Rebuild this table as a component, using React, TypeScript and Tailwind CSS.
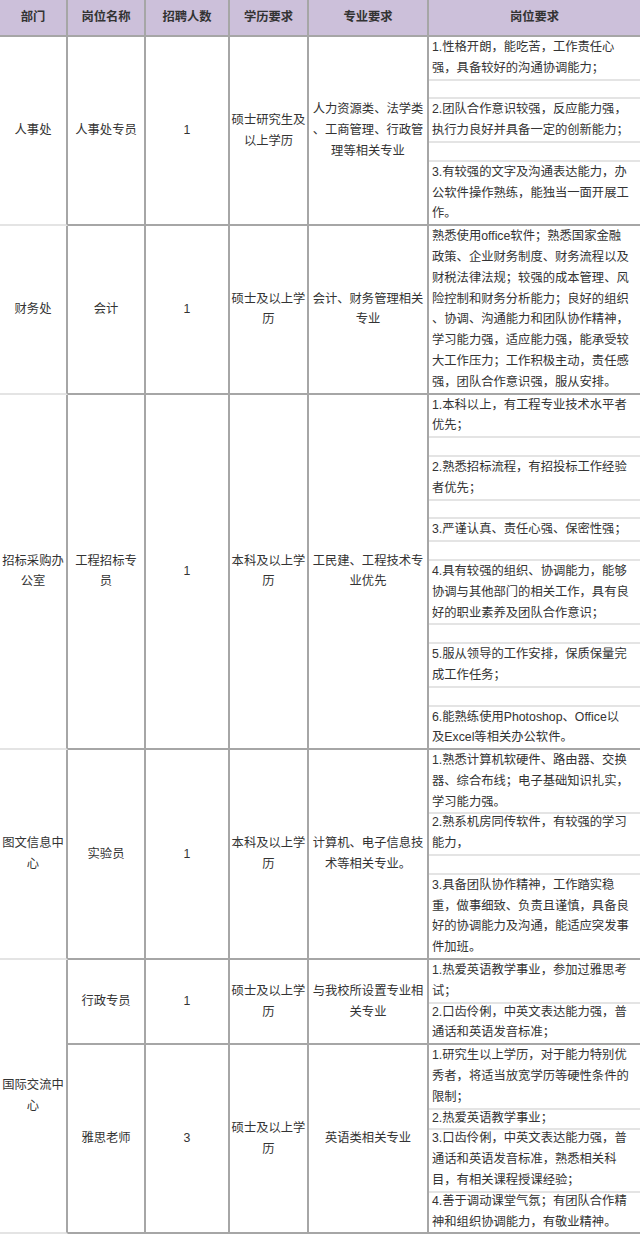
type Item = string[] | null;

type Row = {
  dept?: string[];
  deptSpan?: number;
  post: string[];
  count: string;
  edu: string[];
  major: string[];
  items: Item[];
};

const rows: Row[] = [
  {
    dept: ["人事处"],
    post: ["人事处专员"],
    count: "1",
    edu: ["硕士研究生及", "以上学历"],
    major: ["人力资源类、法学类", "、工商管理、行政管", "理等相关专业"],
    items: [
      ["1.性格开朗，能吃苦，工作责任心", "强，具备较好的沟通协调能力；"],
      null,
      ["2.团队合作意识较强，反应能力强，", "执行力良好并具备一定的创新能力；"],
      null,
      ["3.有较强的文字及沟通表达能力，办", "公软件操作熟练，能独当一面开展工", "作。"],
    ],
  },
  {
    dept: ["财务处"],
    post: ["会计"],
    count: "1",
    edu: ["硕士及以上学", "历"],
    major: ["会计、财务管理相关", "专业"],
    items: [
      [
        "熟悉使用office软件；熟悉国家金融",
        "政策、企业财务制度、财务流程以及",
        "财税法律法规；较强的成本管理、风",
        "险控制和财务分析能力；良好的组织",
        "、协调、沟通能力和团队协作精神，",
        "学习能力强，适应能力强，能承受较",
        "大工作压力；工作积极主动，责任感",
        "强，团队合作意识强，服从安排。",
      ],
    ],
  },
  {
    dept: ["招标采购办", "公室"],
    post: ["工程招标专", "员"],
    count: "1",
    edu: ["本科及以上学", "历"],
    major: ["工民建、工程技术专", "业优先"],
    items: [
      ["1.本科以上，有工程专业技术水平者", "优先；"],
      null,
      ["2.熟悉招标流程，有招投标工作经验", "者优先；"],
      null,
      ["3.严谨认真、责任心强、保密性强；"],
      null,
      ["4.具有较强的组织、协调能力，能够", "协调与其他部门的相关工作，具有良", "好的职业素养及团队合作意识；"],
      null,
      ["5.服从领导的工作安排，保质保量完", "成工作任务；"],
      null,
      ["6.能熟练使用Photoshop、Office以", "及Excel等相关办公软件。"],
    ],
  },
  {
    dept: ["图文信息中", "心"],
    post: ["实验员"],
    count: "1",
    edu: ["本科及以上学", "历"],
    major: ["计算机、电子信息技", "术等相关专业。"],
    items: [
      ["1.熟悉计算机软硬件、路由器、交换", "器、综合布线；电子基础知识扎实，", "学习能力强。"],
      ["2.熟系机房同传软件，有较强的学习", "能力，"],
      null,
      ["3.具备团队协作精神，工作踏实稳", "重，做事细致、负责且谨慎，具备良", "好的协调能力及沟通，能适应突发事", "件加班。"],
    ],
  },
  {
    dept: ["国际交流中", "心"],
    deptSpan: 2,
    post: ["行政专员"],
    count: "1",
    edu: ["硕士及以上学", "历"],
    major: ["与我校所设置专业相", "关专业"],
    items: [
      ["1.热爱英语教学事业，参加过雅思考", "试；"],
      ["2.口齿伶俐，中英文表达能力强，普", "通话和英语发音标准；"],
    ],
  },
  {
    post: ["雅思老师"],
    count: "3",
    edu: ["硕士及以上学", "历"],
    major: ["英语类相关专业"],
    items: [
      ["1.研究生以上学历，对于能力特别优", "秀者，将适当放宽学历等硬性条件的", "限制；"],
      ["2.热爱英语教学事业；"],
      ["3.口齿伶俐，中英文表达能力强，普", "通话和英语发音标准，熟悉相关科", "目，有相关课程授课经验；"],
      ["4.善于调动课堂气氛；有团队合作精", "神和组织协调能力，有敬业精神。"],
    ],
  },
];

const Lines = ({ lines }: { lines: string[] }) => (
  <>
    {lines.map((l, i) => (
      <div key={i} className="h-[20.8px] leading-[20.8px] whitespace-nowrap">
        {l}
      </div>
    ))}
  </>
);

const cell = "border-r-2 border-b-2 border-[#a6a6a6] text-center align-middle p-0";

export default function App() {
  return (
    <div
      className="w-[640px] bg-white text-[#333] text-[12.3px]"
      style={{ fontFamily: '"Liberation Sans", "Noto Sans CJK SC", sans-serif' }}
    >
      <table className="w-[640px] table-fixed border-separate border-spacing-0">
        <thead>
          <tr className="bg-[#ccc0da] font-bold">
            <th className="w-[68px] h-[37px] border-r-2 border-b-2 border-[#a6a6a6]">部门</th>
            <th className="w-[78px] border-r-2 border-b-2 border-[#a6a6a6]">岗位名称</th>
            <th className="w-[84px] border-r-2 border-b-2 border-[#a6a6a6]">招聘人数</th>
            <th className="w-[79px] border-r-2 border-b-2 border-[#a6a6a6]">学历要求</th>
            <th className="w-[120px] border-r-2 border-b-2 border-[#a6a6a6]">专业要求</th>
            <th className="w-[211px] border-b-2 border-[#a6a6a6]">岗位要求</th>
          </tr>
        </thead>
        <tbody>
          {rows.map((row, ri) => (
            <tr key={ri}>
              {row.dept && (
                <td
                  rowSpan={row.deptSpan ?? 1}
                  className="border-r-2 border-[#a6a6a6] border-b-2 border-b-[#e4e4e4] text-center align-middle p-0"
                >
                  <Lines lines={row.dept} />
                </td>
              )}
              <td className={cell}>
                <Lines lines={row.post} />
              </td>
              <td className={cell}>
                <Lines lines={[row.count]} />
              </td>
              <td className={cell}>
                <Lines lines={row.edu} />
              </td>
              <td className={cell}>
                <Lines lines={row.major} />
              </td>
              <td className="border-b-2 border-[#a6a6a6] align-top p-0">
                {row.items.map((it, i) => {
                  if (!it) {
                    return <div key={i} className="h-[20.8px] border-y-2 border-[#e4e4e4]" />;
                  }
                  const prevText = i > 0 && row.items[i - 1] !== null;
                  return (
                    <div
                      key={i}
                      className={
                        prevText
                          ? "pl-[3px] overflow-hidden shadow-[inset_0_2px_0_#e4e4e4]"
                          : "pl-[3px] overflow-hidden"
                      }
                    >
                      <Lines lines={it} />
                    </div>
                  );
                })}
              </td>
            </tr>
          ))}
        </tbody>
      </table>
    </div>
  );
}
